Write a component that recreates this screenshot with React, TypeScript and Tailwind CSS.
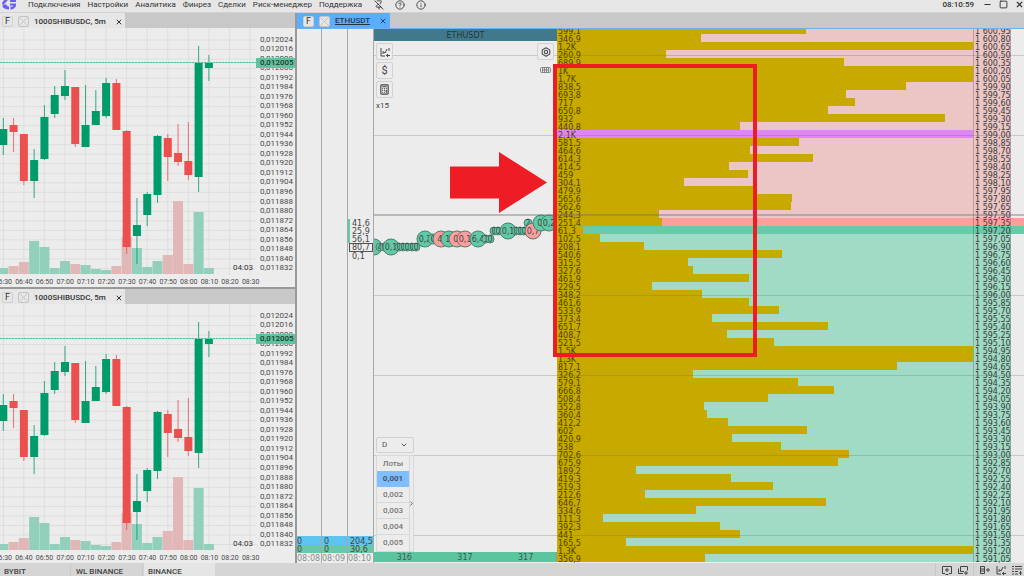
import type { ReactNode } from "react";
import { Bolt, Calculator, ChevronDown, ChevronRight, CircleHelp, Info, Minus, PinOff, Square, X } from "lucide-react";

interface Candle {
  up: boolean;
  high: number;
  low: number;
  top: number;
  bottom: number;
  volume: number;
}

const MENU = ["Подключения", "Настройки", "Аналитика", "Финрез", "Сделки", "Риск-менеджер", "Поддержка"];

// Vertical values are offsets from the top of the plot
const CANDLES: Candle[] = [
  { up: true, high: 90, low: 127, top: 101, bottom: 117, volume: 6 },
  { up: false, high: 90, low: 124, top: 97, bottom: 104, volume: 8 },
  { up: false, high: 106, low: 157, top: 106, bottom: 153, volume: 12 },
  { up: true, high: 121, low: 170, top: 132, bottom: 153, volume: 33 },
  { up: true, high: 77, low: 132, top: 89, bottom: 131, volume: 27 },
  { up: true, high: 58, low: 90, top: 67, bottom: 86, volume: 6 },
  { up: true, high: 42, low: 72, top: 58, bottom: 68, volume: 13 },
  { up: false, high: 59, low: 119, top: 59, bottom: 116, volume: 10 },
  { up: true, high: 57, low: 119, top: 97, bottom: 119, volume: 9 },
  { up: true, high: 62, low: 97, top: 83, bottom: 97, volume: 5 },
  { up: true, high: 50, low: 90, top: 55, bottom: 88, volume: 4 },
  { up: false, high: 51, low: 102, top: 55, bottom: 102, volume: 8 },
  { up: false, high: 102, low: 226, top: 103, bottom: 219, volume: 37 },
  { up: true, high: 170, low: 236, top: 197, bottom: 208, volume: 26 },
  { up: true, high: 164, low: 198, top: 166, bottom: 187, volume: 7 },
  { up: true, high: 107, low: 175, top: 108, bottom: 167, volume: 13 },
  { up: false, high: 106, low: 153, top: 110, bottom: 129, volume: 19 },
  { up: false, high: 96, low: 138, top: 125, bottom: 134, volume: 73 },
  { up: false, high: 94, low: 152, top: 133, bottom: 147, volume: 10 },
  { up: true, high: 18, low: 164, top: 35, bottom: 149, volume: 62 },
  { up: true, high: 27, low: 53, top: 34, bottom: 40, volume: 6 },
];

const AXIS_PRICES = Array.from({ length: 25 }, (_, i) => `0,0${12024 - i * 8}`);
const AXIS_TIMES = [
  "06:30", "06:40", "06:50", "07:00", "07:10", "07:20", "07:30",
  "07:40", "07:50", "08:00", "08:10", "08:20", "08:30",
];

const VOLUMES = [
  "599,1", "346,9", "1,2K", "260,9", "689,9", "1K", "1,7K", "838,5", "693,8", "717",
  "650,8", "932", "440,8", "2,1K", "581,5", "464,6", "614,3", "414,5", "459", "304,1",
  "479,9", "565,6", "562,6", "244,3", "251,4", "61,3", "102,5", "208,1", "540,6", "315,5",
  "327,6", "461,9", "229,5", "348,2", "461,6", "533,9", "373,4", "651,7", "408,7", "521,5",
  "1,5K", "1,3K", "817,1", "326,2", "579,1", "666,8", "508,4", "352,8", "360,4", "412,2",
  "602", "420,9", "538", "702,6", "675,9", "189,2", "419,3", "519,3", "212,6", "646,7",
  "334,6", "111,3", "392,3", "441", "165,5", "1,3K", "356,9",
];
const BEST_ASK = 24;
const BEST_BID = 25;
const HIGHLIGHTED = 13;

// [x, y, radius, is a buy, label]
const TICKS: [number, number, number, boolean, string][] = [
  [0, 218, 8, true, ""],
  [6, 218, 4, true, "4"],
  [10, 218, 4, true, "0"],
  [17, 218, 8, true, "0,1"],
  [25, 218, 4, true, "0"],
  [29, 218, 4, true, "0"],
  [33, 218, 4, true, "0"],
  [38, 218, 4, true, "0"],
  [42, 218, 4, true, "0"],
  [51, 210, 8, true, "0,2"],
  [59, 210, 5, true, "0"],
  [67, 210, 8, false, "4,"],
  [75, 210, 8, true, "1,"],
  [83, 210, 8, false, "0,"],
  [91, 210, 8, false, "0,1"],
  [104, 210, 8, true, "6,4"],
  [112, 210, 4, true, "1"],
  [116, 210, 4, true, "0"],
  [120, 202, 4, true, "0"],
  [124, 202, 4, true, "0"],
  [134, 202, 8, true, "0,1"],
  [142, 202, 4, true, "0"],
  [146, 202, 4, true, "0"],
  [150, 202, 4, true, "0"],
  [154, 194, 4, true, "2"],
  [159, 202, 8, false, "0,7"],
  [167, 194, 8, true, "0,"],
  [175, 194, 8, true, "0,2"],
];

function volumePercent(label: string) {
  const value = parseFloat(label.replace(",", "."));
  return label.endsWith("K") ? 100 : Math.min(100, value / 10);
}

function formatPrice(index: number) {
  const cents = 160095 - index * 15;
  return `1 ${String(cents).slice(1, 4)},${String(cents).slice(4)}`;
}

function Logo() {
  return (
    <svg width="15" height="10" viewBox="0 0 15 10" aria-hidden="true">
      <path d="M6 0H2.500C1 1 0 2.500 0 4.500h4.500C5 6 5.500 6.500 7 6.500V9.500C3.500 9.500 1 8 .3 6" fill="#6a5ff5" />
      <path d="M8 0v2h6V0M8 3.500h6C14.500 7 12 9.500 8.500 9.500V6.500H11V5.500H8" fill="#6a5ff5" />
    </svg>
  );
}

function CrossedBox() {
  return (
    <svg width="11" height="11" viewBox="0 0 11 11" fill="none" stroke="#c4c4c4" aria-hidden="true">
      <rect x=".5" y=".5" width="10" height="10" rx="1.500" fill="#e6e6e6" />
      <path d="M1.500 1.500l8 8M9.500 1.500l-8 8" />
    </svg>
  );
}

function TabTools() {
  return (
    <>
      <button
        aria-label="Формат"
        className="flex h-[11px] w-[11px] items-center justify-center rounded-xs border border-[#cfcfcf] bg-[#e6e6e6] text-[9px] leading-none text-[#333]"
      >
        F
      </button>
      <button aria-label="Связать">
        <CrossedBox />
      </button>
    </>
  );
}

function ChartPane({ last = false }: { last?: boolean }) {
  const x = (i: number) => 3.3 + i * 10.28;

  return (
    <section className={last ? "" : "border-b-2 border-[#999]"}>
      <div className="flex h-[15px] bg-[#c8c8c8]">
        <div className="flex w-[125px] items-center gap-[5px] bg-[#e6e6e6] pl-0.5 pt-0.5">
          <TabTools />
          <span className="whitespace-nowrap text-[8px] font-medium text-[#333]">1000SHIBUSDC, 5m</span>
          <button aria-label="Закрыть" className="ml-auto mr-0.5 text-[#333]">
            <X size={8} strokeWidth={3} />
          </button>
        </div>
      </div>
      <div className="relative h-[259px] overflow-hidden bg-[#ececec]">
        <div className="flex">
          <svg width="256" height="247" viewBox="0 0 256 247" className="shrink-0">
            <g stroke="#dedede">
              {AXIS_TIMES.map((time, i) => (
                <line key={time} x1={x(i * 2)} x2={x(i * 2)} y1="0" y2="247" />
              ))}
              {AXIS_PRICES.map((price, i) => (
                <line key={price} x1="0" x2="256" y1={12 + i * 9.52} y2={12 + i * 9.52} />
              ))}
            </g>
            {CANDLES.map((c, i) => (
              <rect
                key={i}
                x={x(i) - 5}
                y={246 - c.volume}
                width="10"
                height={c.volume}
                fill={c.up ? "#92d0bb" : "#e1b7b7"}
              />
            ))}
            {CANDLES.map((c, i) => (
              <g key={i} fill={c.up ? "#009b6b" : "#eb504e"}>
                <rect x={x(i) - 0.5} y={c.high} width="1" height={c.low - c.high} opacity=".8" />
                <rect x={x(i) - 4} y={c.top} width="8" height={c.bottom - c.top} />
              </g>
            ))}
            <line x1="0" x2="256" y1="34.500" y2="34.500" stroke="#a5d8c6" />
            <line x1="0" x2="256" y1="34.500" y2="34.500" stroke="#55bd99" strokeDasharray="2 1" />
          </svg>
          <div className="mt-[7px] flex h-[238px] flex-col pl-1 text-[8px] leading-none text-[#4a4a4a]">
            {AXIS_PRICES.map((price) => (
              <span key={price} className="flex flex-1 items-center">{price}</span>
            ))}
          </div>
        </div>
        <div className="-ml-[7px] flex w-[268px] text-[7px] leading-[14px] text-[#4a4a4a]">
          {AXIS_TIMES.map((time) => (
            <span key={time} className="flex-1 text-center">{time}</span>
          ))}
        </div>
        <span className="absolute right-0 top-[30px] w-[39px] bg-[#5cc5a0] pl-1 text-[8px] font-medium leading-[10px] text-[#1d3a30]">
          0,012005
        </span>
        <span className="absolute right-[42px] top-[235px] text-[8px] leading-[10px] text-[#333]">04:03</span>
      </div>
    </section>
  );
}

function ClusterColumns() {
  const columns = [
    { time: "08:08", blue: "0", green: "0" },
    { time: "08:09", blue: "0", green: "0" },
    { time: "08:10", blue: "204,5", green: "30,6" },
  ];
  return (
    <div className="flex w-[77px] shrink-0 overflow-hidden font-['DejaVu_Sans',sans-serif] text-[8px]">
      {columns.map((column, i) => (
        <div
          key={column.time}
          className={`flex flex-col justify-end border-r border-[#a8a8a8] leading-[10px] text-[#444] ${i === 0 ? "w-[25px]" : "w-[26px]"}`}
        >
          {i === 2 && (
            <div className="mb-[276px]">
              <div className="border-l-2 border-[#66c9a9]">
                {["41,6", "25,9", "56,1"].map((value) => (
                  <div key={value} className="h-2 pl-0.5">{value}</div>
                ))}
              </div>
              <div className="ml-px h-[9px] border border-[#555] pl-0.5 leading-[8px]">80,7</div>
              <div className="h-2 pl-1 leading-[9px]">0,1</div>
            </div>
          )}
          <div className={`h-[9px] bg-[#5cc4ee] leading-[11px] ${i === 0 ? "" : "pl-0.5"}`}>{column.blue}</div>
          <div className={`h-2 bg-[#6ac8aa] ${i === 0 ? "" : "pl-0.5"}`}>{column.green}</div>
          <div className="h-[10px] whitespace-nowrap leading-[11px] text-[#8c8c8c]">{column.time}</div>
        </div>
      ))}
    </div>
  );
}

function ToolButton({ label, children }: { label: string; children: ReactNode }) {
  return (
    <button
      aria-label={label}
      className="flex h-[17px] w-[17px] items-center justify-center rounded-xs border border-[#d2d2d2] bg-[#ececec] text-[11px] leading-none text-[#444]"
    >
      {children}
    </button>
  );
}

function ChartAddIcon() {
  return (
    <svg width="10" height="10" viewBox="0 0 10 10" fill="none" stroke="currentColor" aria-hidden="true">
      <path d="M1 1v8h4M3 7V4.500l2 1.500 2-4M9 1v3M7.500 7v3M6 8.500h4" />
    </svg>
  );
}

function TicksPanel() {
  return (
    <div className="relative flex w-[183px] shrink-0 flex-col">
      <div className="h-[12px] bg-[#40798c] text-center font-['DejaVu_Sans',sans-serif] text-[8px] leading-[14px] text-[#26383f]">
        ETHUSDT
      </div>
      <svg width="182" height="245" viewBox="0 0 182 245" className="absolute left-0 top-0">
        <g strokeWidth="1" className="font-['DejaVu_Sans',sans-serif] text-[8px]">
          {TICKS.map(([x, y, r, buy, label], i) => (
            <g key={i}>
              <circle cx={x} cy={y} r={r} fill={buy ? "#62c9a8" : "#ff9d9c"} stroke="#4f7d70" />
              <text x={x} y={y + 3} textAnchor="middle" fill="#3b4a45">{label}</text>
            </g>
          ))}
        </g>
      </svg>
      <div className="relative z-10 mt-[2px] flex items-start justify-between pl-0.5 pr-[3px]">
        <div className="flex flex-col gap-0.5">
          <ToolButton label="Добавить график"><ChartAddIcon /></ToolButton>
          <ToolButton label="Валюта">$</ToolButton>
          <ToolButton label="Калькулятор"><Calculator size={11} strokeWidth={2.5} /></ToolButton>
          <span className="pt-px text-[8px] leading-[10px] text-[#444]">x15</span>
        </div>
        <div className="flex flex-col items-center gap-[6px]">
          <ToolButton label="Настройки"><Bolt size={10} strokeWidth={2.5} /></ToolButton>
          <svg width="11" height="8" viewBox="0 0 11 8" fill="none" stroke="#858585" aria-hidden="true">
            <rect x=".5" y="1.500" width="10" height="5" rx="1" />
            <path d="M2.500 2v4M4.500 2v4M6.500 2v4M8.500 2v4M3 4h5" />
          </svg>
        </div>
      </div>
      <div className="relative z-10 mt-auto w-[41px] pl-[2px] text-[8px] text-[#555]">
        <label className="relative mb-[2px] block">
          <select
            aria-label="Период"
            className="h-4 w-[38px] appearance-none rounded-xs border border-[#d0d0d0] bg-[#ececec] pl-[5px] text-[8px] leading-none"
          >
            <option>D</option>
          </select>
          <ChevronDown size={8} strokeWidth={3} className="pointer-events-none absolute right-[7px] top-1" />
        </label>
        <div className="flex w-[38px] border border-[#d8d8d8] bg-[#ececec]">
          <div className="w-8 text-center font-medium text-[#777]">
            <div className="h-[15px] leading-[16px]">Лоты</div>
            <button className="block h-4 w-full bg-[#7fbfff] font-bold text-[#44556b]">0,001</button>
            {["0,002", "0,003", "0,004", "0,005"].map((lot) => (
              <button key={lot} className="block h-4 w-full border-b border-[#d8d8d8] last:border-b-0">{lot}</button>
            ))}
          </div>
          <button aria-label="Развернуть" className="flex w-1 items-center justify-center border-l border-[#d8d8d8]">
            <ChevronRight size={7} strokeWidth={3} className="shrink-0" />
          </button>
        </div>
      </div>
      <div className="mb-px flex h-[10px] border-r border-[#999] bg-[#5cc5a0] font-['DejaVu_Sans',sans-serif] text-[8px] leading-[12px] text-[#3c5a50]">
        {["316", "317", "317"].map((value, i) => (
          <span key={i} className="flex-1 text-center">{value}</span>
        ))}
      </div>
    </div>
  );
}

function rowColor(index: number) {
  if (index === BEST_ASK) return "bg-[#ff9f9c]";
  if (index === BEST_BID) return "bg-[#68caab]";
  return index < BEST_ASK ? "bg-[#ecc5c5]" : "bg-[#a0dbc5]";
}

function OrderBook() {
  return (
    <div className="min-w-0 flex-1 overflow-hidden">
      <table className="-mt-[3px] w-full table-fixed border-collapse font-['DejaVu_Sans',sans-serif] text-[8px] leading-[11px] text-[#3a3a3a]">
        <colgroup>
          <col />
          <col className="w-[38px]" />
          <col className="w-[13px]" />
        </colgroup>
        <tbody>
          {VOLUMES.map((volume, i) => {
            const best = i === BEST_ASK || i === BEST_BID;
            return (
              <tr key={i}>
                <td className={`p-0 ${rowColor(i)}`}>
                  <div
                    className={`h-2 whitespace-nowrap pl-px text-[#4d4200] ${i === HIGHLIGHTED ? "bg-[#e085f7]" : "bg-[#c8a900]"}`}
                    style={{ width: `${volumePercent(volume)}%` }}
                  >
                    {volume}
                  </div>
                </td>
                <td className={`p-0 ${rowColor(i)}`}>
                  <div className="h-2 whitespace-nowrap border-x border-black/20 pl-px">{formatPrice(i)}</div>
                </td>
                <td className={`p-0 ${best ? rowColor(i) : "bg-[#ececec]"}`} />
              </tr>
            );
          })}
        </tbody>
      </table>
    </div>
  );
}

function GridLines() {
  return (
    <div className="pointer-events-none absolute inset-0">
      <div className="absolute inset-x-0 top-[26px] h-px bg-[#707070]/30" />
      <div className="absolute inset-x-0 top-[106px] h-px bg-[#707070]/30" />
      <div className="absolute inset-x-0 top-[185px] h-0.5 bg-[#707070]/40" />
      <div className="absolute inset-x-0 top-[266px] h-px bg-[#707070]/30" />
      <div className="absolute inset-x-0 top-[346px] h-px bg-[#707070]/30" />
      <div className="absolute inset-x-0 top-[426px] h-px bg-[#707070]/30" />
      <div className="absolute inset-x-0 top-[506px] h-px bg-[#707070]/30" />
    </div>
  );
}

function Annotations() {
  return (
    <>
      <div className="pointer-events-none absolute left-[179px] top-[35px] z-20 h-[293px] w-[204px] border-4 border-[#ee1c24]" />
      <svg width="97" height="62" viewBox="0 0 97 62" className="pointer-events-none absolute left-[76px] top-[123px] z-20">
        <path d="M0 14.500h49V0l48 30.500L49 61V46.500H0z" fill="#ee1c24" />
      </svg>
    </>
  );
}

function FooterIcons() {
  const icon = "h-[10px] w-[10px]";
  return (
    <div className="ml-auto flex items-center text-[#444]">
      <div className="flex h-full items-center gap-[6px] border-l border-[#c6c6c6] pl-[6px] pr-[5px]">
        <button aria-label="Новое окно">
          <svg className={icon} viewBox="0 0 10 10" fill="none" stroke="currentColor">
            <path d="M3 8.500H.5V1.500h9v7H7M3 5h4M5 3v4M3.500 9.500h3" />
          </svg>
        </button>
        <button aria-label="Добавить окно">
          <svg className={icon} viewBox="0 0 10 10" fill="none" stroke="currentColor">
            <path d="M2.500 1.500h7v4M2.500 1.500v5H6M.5 3.500v5H5M8 6v4M6 8h4" />
          </svg>
        </button>
      </div>
      <div className="flex h-full items-center gap-[6px] border-l border-[#c6c6c6] pl-[6px] pr-0.5">
        <button aria-label="Добавить стакан">
          <svg className={icon} viewBox="0 0 10 10" fill="none" stroke="currentColor">
            <path d="M.5 1.500h4v7h-4zM.5 4h4M.5 6h4M6 5h4M8 3v4" />
          </svg>
        </button>
        <button aria-label="Добавить график">
          <ChartAddIcon />
        </button>
        <button aria-label="Добавить список">
          <svg className={icon} viewBox="0 0 10 10" fill="none" stroke="currentColor">
            <path d="M0 1.500h2M3 1.500h7M0 4h2M3 4h7M0 6.500h2M3 6.500h3M0 9h2M3 9h3M8.500 6v4M7 8h3" />
          </svg>
        </button>
      </div>
    </div>
  );
}

export default function App() {
  return (
    <div className="flex h-screen flex-col overflow-hidden bg-[#ececec] font-[Roboto,sans-serif] text-[8px] leading-none">
      <header className="flex h-[13px] shrink-0 items-start border-b border-[#d2d2d2] bg-[#e6e6e6] pl-[2px] text-[#333]">
        <Logo />
        <nav className="ml-[11px] flex gap-[7px]">
          {MENU.map((item) => (
            <button key={item} className="leading-[9px]">{item}</button>
          ))}
        </nav>
        <div className="ml-[12px] flex gap-[11px]">
          <button aria-label="Открепить"><PinOff size={10} /></button>
          <button aria-label="Помощь"><CircleHelp size={10} /></button>
          <button aria-label="О программе"><Info size={10} /></button>
        </div>
        <time className="ml-auto text-[8px] font-medium leading-[9px]">08:10:59</time>
        <div className="ml-[9px] flex gap-[7px]">
          <button aria-label="Свернуть"><Minus size={9} strokeWidth={3} /></button>
          <button aria-label="Развернуть"><Square size={9} strokeWidth={2.5} /></button>
          <button aria-label="Закрыть"><X size={9} strokeWidth={3} /></button>
        </div>
      </header>

      <main className="flex min-h-0 flex-1">
        <div className="w-[297px] shrink-0 overflow-hidden border-r-2 border-[#999]">
          <ChartPane />
          <ChartPane last />
        </div>

        <section className="flex min-w-0 flex-1 flex-col">
          <div className="flex h-4 shrink-0 border-b border-[#6cb2f2] bg-[#c8c8c8]">
            <div className="flex w-[93px] items-center gap-[5px] bg-[#5aaeff] pl-[6px] pt-px">
              <TabTools />
              <a href="#ethusdt" className="text-[8px] font-medium text-[#1f3550] underline">ETHUSDT</a>
              <button aria-label="Закрыть" className="ml-auto mr-[3px] text-[#24466b]">
                <X size={8} strokeWidth={3} />
              </button>
            </div>
          </div>
          <div className="flex min-h-0 flex-1">
            <ClusterColumns />
            <div className="relative flex min-w-0 flex-1">
              <TicksPanel />
              <OrderBook />
              <GridLines />
              <Annotations />
            </div>
          </div>
        </section>
      </main>

      <footer className="flex h-[13px] shrink-0 bg-[#d5d5d5] font-medium text-[#444]">
        <nav className="flex gap-px leading-[17px]">
          <button className="flex w-[71px] border-r border-[#cacaca] pl-1">BYBIT</button>
          <button className="flex w-[71px] border-r border-[#cacaca] pl-1">WL BINANCE</button>
          <button className="flex w-[71px] bg-[#e5e5e5] pl-1">BINANCE</button>
        </nav>
        <FooterIcons />
      </footer>
    </div>
  );
}
